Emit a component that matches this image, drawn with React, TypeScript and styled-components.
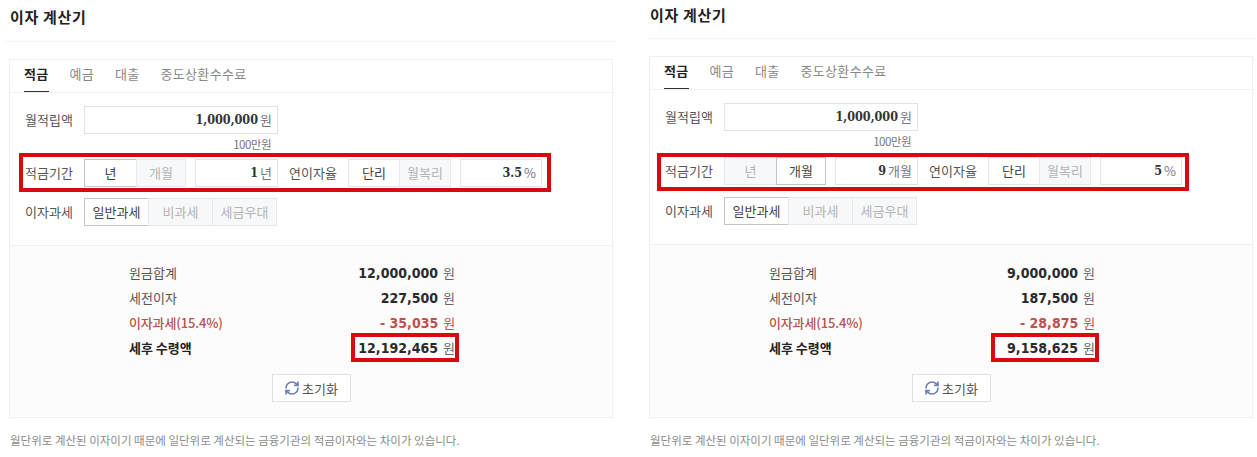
import React from 'react';
import styled, { createGlobalStyle } from 'styled-components';
import { RefreshCw } from 'lucide-react';

const GlobalStyle = createGlobalStyle`
  html, body {
    margin: 0;
    padding: 0;
    background: #fff;
  }

  body {
    font-family: "Noto Sans CJK KR", "Noto Sans", sans-serif;
    font-size: 13px;
    color: #444;
  }
`;

const Page = styled.div`
  display: flex;
  align-items: flex-start;
  width: 1257px;
  height: 457px;
  overflow: hidden;
`;

const Column = styled.section<{ $alt?: boolean }>`
  flex: 0 0 ${(p) => (p.$alt ? 617 : 640)}px;
  padding-left: 9px;
  box-sizing: border-box;
`;

const Title = styled.h2<{ $alt?: boolean }>`
  margin: 0 0 0 ${(p) => (p.$alt ? -2 : -4)}px;
  height: ${(p) => (p.$alt ? 39 : 42)}px;
  width: ${(p) => (p.$alt ? 609 : 611)}px;
  padding: ${(p) => (p.$alt ? 5 : 7)}px 0 0 ${(p) => (p.$alt ? 3 : 5)}px;
  box-sizing: border-box;
  border-bottom: 1px solid #f4f4f4;
  font-size: 15px;
  line-height: 20px;
  font-weight: 700;
  color: #222;
  letter-spacing: 0.7px;
`;

const Panel = styled.div<{ $alt?: boolean }>`
  margin-top: 17px;
  width: 604px;
  height: ${(p) => (p.$alt ? 362 : 359)}px;
  box-sizing: border-box;
  border: 1px solid #f0f0f0;
  display: flex;
  flex-direction: column;
`;

const Tabs = styled.div`
  display: flex;
  height: 32px;
  padding-left: 14px;
  gap: 21px;
  border-bottom: 1px solid #f0f0f0;
  flex: none;
`;

const Tab = styled.div<{ $active?: boolean }>`
  height: 32px;
  line-height: 28px;
  font-size: 13px;
  letter-spacing: 0.3px;
  box-sizing: border-box;
  font-weight: ${(p) => (p.$active ? 700 : 400)};
  color: ${(p) => (p.$active ? '#222' : '#888')};
  border-bottom: 1px solid ${(p) => (p.$active ? '#333' : 'transparent')};
`;

const Form = styled.div<{ $alt?: boolean }>`
  padding: 13px 0 0 15px;
  height: ${(p) => (p.$alt ? 155 : 153)}px;
  box-sizing: border-box;
  border-bottom: 1px solid #f0f0f0;
  flex: none;
`;

const Row = styled.div`
  display: flex;
  align-items: center;
  height: 28px;
`;

const Label = styled.label<{ $wide?: boolean }>`
  width: 59px;
  margin-left: ${(p) => (p.$wide ? 11 : 0)}px;
  padding-bottom: 2px;
  flex: none;
  color: #555;
  font-size: 13px;
`;

const Field = styled.div<{ $width: number; $gap?: number }>`
  width: ${(p) => p.$width}px;
  height: 28px;
  margin-left: ${(p) => p.$gap ?? 0}px;
  box-sizing: border-box;
  border: 1px solid #e2e2e2;
  background: #fff;
  display: flex;
  align-items: center;
  justify-content: flex-end;
  padding: 0 5px 1px 0;
  gap: 2px;
  flex: none;
`;

const FieldValue = styled.strong`
  font-family: "DejaVu Serif", serif;
  font-stretch: condensed;
  font-size: 12.5px;
  font-weight: 700;
  color: #333;
`;

const Unit = styled.span`
  color: #777;
  font-size: 13px;
`;

const Hint = styled.div<{ $alt?: boolean }>`
  width: 246px;
  height: ${(p) => (p.$alt ? 26 : 25)}px;
  line-height: 20px;
  text-align: right;
  font-size: 11.5px;
  letter-spacing: -0.5px;
  color: #777;
`;

const Highlight = styled.div<{ $alt?: boolean }>`
  width: 532px;
  height: ${(p) => (p.$alt ? 38 : 39)}px;
  box-sizing: border-box;
  border: 4px solid #d90a0f;
  margin-left: ${(p) => (p.$alt ? -8 : -6)}px;
  margin-top: ${(p) => (p.$alt ? -4 : -6)}px;
  margin-bottom: 6px;
  padding-left: ${(p) => (p.$alt ? 4 : 2)}px;
  padding-top: ${(p) => (p.$alt ? 0 : 2)}px;
`;

const Segments = styled.div`
  display: flex;
  flex: none;
`;

const Segment = styled.div<{ $width: number; $active?: boolean; $soft?: boolean }>`
  width: ${(p) => p.$width}px;
  height: 28px;
  box-sizing: border-box;
  line-height: 25px;
  text-align: center;
  font-size: 13px;
  border: 1px solid ${(p) => (p.$active ? (p.$soft ? '#e4e4e4' : '#c4c4c4') : '#e8e8e8')};
  background: ${(p) => (p.$active ? '#fff' : '#f7f8fa')};
  color: ${(p) => (p.$active ? '#444' : '#b4b4b4')};
  margin-left: -1px;

  &:first-child {
    margin-left: 0;
  }
`;

const Results = styled.div<{ $alt?: boolean }>`
  flex: 1;
  background: #fcfcfc;
  display: flex;
  flex-direction: column;
  padding: ${(p) => (p.$alt ? 15 : 14)}px 0 0 119px;
`;

const ResultRow = styled.div<{ $tone?: 'red' | 'total' }>`
  width: 326px;
  height: 25px;
  display: flex;
  align-items: center;
  justify-content: space-between;
  font-size: 13px;
  letter-spacing: ${(p) => (p.$tone === 'red' ? -0.15 : 0)}px;
  color: ${(p) => (p.$tone === 'red' ? '#c0504d' : p.$tone === 'total' ? '#222' : '#555')};
  font-weight: ${(p) => (p.$tone === 'total' ? 700 : p.$tone === 'red' ? 500 : 400)};
`;

const Amount = styled.div<{ $boxed?: boolean }>`
  display: flex;
  align-items: center;
  justify-content: flex-end;
  gap: 5px;
  box-sizing: border-box;
  ${(p) =>
    p.$boxed &&
    `
    width: 108px;
    height: 29px;
    margin-right: -4px;
    border: 4px solid #d90a0f;
  `}
`;

const AmountValue = styled.strong<{ $red?: boolean }>`
  font-family: "DejaVu Sans", sans-serif;
  font-stretch: condensed;
  font-size: 14px;
  font-weight: 700;
  letter-spacing: 0;
  color: ${(p) => (p.$red ? '#c0504d' : '#2a2a2a')};
`;

const AmountUnit = styled.span<{ $red?: boolean }>`
  font-size: 13px;
  font-weight: 400;
  color: ${(p) => (p.$red ? '#c0504d' : '#666')};
`;

const Actions = styled.div`
  display: flex;
  justify-content: center;
  margin: 14px 0 0 -119px;
`;

const ResetButton = styled.button`
  width: 79px;
  height: 28px;
  box-sizing: border-box;
  border: 1px solid #dfdfdf;
  background: #fff;
  font-family: inherit;
  font-size: 13px;
  color: #555;
  display: flex;
  align-items: center;
  justify-content: center;
  gap: 2px;
  padding: 0;

  svg {
    color: #6f80b8;
  }
`;

const Note = styled.p`
  margin: 13px 0 0 1px;
  font-size: 11.5px;
  line-height: 18px;
  letter-spacing: 0;
  color: #8c8c8c;
  white-space: nowrap;
`;

type CalcProps = {
  alt?: boolean;
  period: string;
  periodUnit: string;
  monthly?: boolean;
  rate: string;
  total: string;
  interest: string;
  tax: string;
  net: string;
};

const Calculator = ({ alt, period, periodUnit, monthly, rate, total, interest, tax, net }: CalcProps) => {
  return (
    <Column $alt={alt}>
      <Title $alt={alt}>이자 계산기</Title>
      <Panel $alt={alt}>
        <Tabs>
          <Tab $active>적금</Tab>
          <Tab>예금</Tab>
          <Tab>대출</Tab>
          <Tab>중도상환수수료</Tab>
        </Tabs>
        <Form $alt={alt}>
          <Row>
            <Label>월적립액</Label>
            <Field $width={194}>
              <FieldValue>1,000,000</FieldValue>
              <Unit>원</Unit>
            </Field>
          </Row>
          <Hint $alt={alt}>100만원</Hint>
          <Highlight $alt={alt}>
            <Row>
              <Label>적금기간</Label>
              <Segments>
                <Segment $width={53} $active={!monthly}>년</Segment>
                <Segment $width={50} $active={monthly}>개월</Segment>
              </Segments>
              <Field $width={83} $gap={9}>
                <FieldValue>{period}</FieldValue>
                <Unit>{periodUnit}</Unit>
              </Field>
              <Label $wide>연이자율</Label>
              <Segments>
                <Segment $width={52} $active $soft>단리</Segment>
                <Segment $width={52}>월복리</Segment>
              </Segments>
              <Field $width={82} $gap={9}>
                <FieldValue>{rate}</FieldValue>
                <Unit>%</Unit>
              </Field>
            </Row>
          </Highlight>
          <Row>
            <Label>이자과세</Label>
            <Segments>
              <Segment $width={65} $active>일반과세</Segment>
              <Segment $width={65}>비과세</Segment>
              <Segment $width={65}>세금우대</Segment>
            </Segments>
          </Row>
        </Form>
        <Results $alt={alt}>
          <ResultRow>
            원금합계
            <Amount>
              <AmountValue>{total}</AmountValue>
              <AmountUnit>원</AmountUnit>
            </Amount>
          </ResultRow>
          <ResultRow>
            세전이자
            <Amount>
              <AmountValue>{interest}</AmountValue>
              <AmountUnit>원</AmountUnit>
            </Amount>
          </ResultRow>
          <ResultRow $tone="red">
            이자과세(15.4%)
            <Amount>
              <AmountValue $red>- {tax}</AmountValue>
              <AmountUnit $red>원</AmountUnit>
            </Amount>
          </ResultRow>
          <ResultRow $tone="total">
            세후 수령액
            <Amount $boxed>
              <AmountValue>{net}</AmountValue>
              <AmountUnit>원</AmountUnit>
            </Amount>
          </ResultRow>
          <Actions>
            <ResetButton>
              <RefreshCw size={16} strokeWidth={2.5} />
              초기화
            </ResetButton>
          </Actions>
        </Results>
      </Panel>
      <Note>월단위로 계산된 이자이기 때문에 일단위로 계산되는 금융기관의 적금이자와는 차이가 있습니다.</Note>
    </Column>
  );
};

const App = () => {
  return (
    <>
      <GlobalStyle />
      <Page>
        <Calculator
          period="1"
          periodUnit="년"
          rate="3.5"
          total="12,000,000"
          interest="227,500"
          tax="35,035"
          net="12,192,465"
        />
        <Calculator
          alt
          monthly
          period="9"
          periodUnit="개월"
          rate="5"
          total="9,000,000"
          interest="187,500"
          tax="28,875"
          net="9,158,625"
        />
      </Page>
    </>
  );
};

export default App;
